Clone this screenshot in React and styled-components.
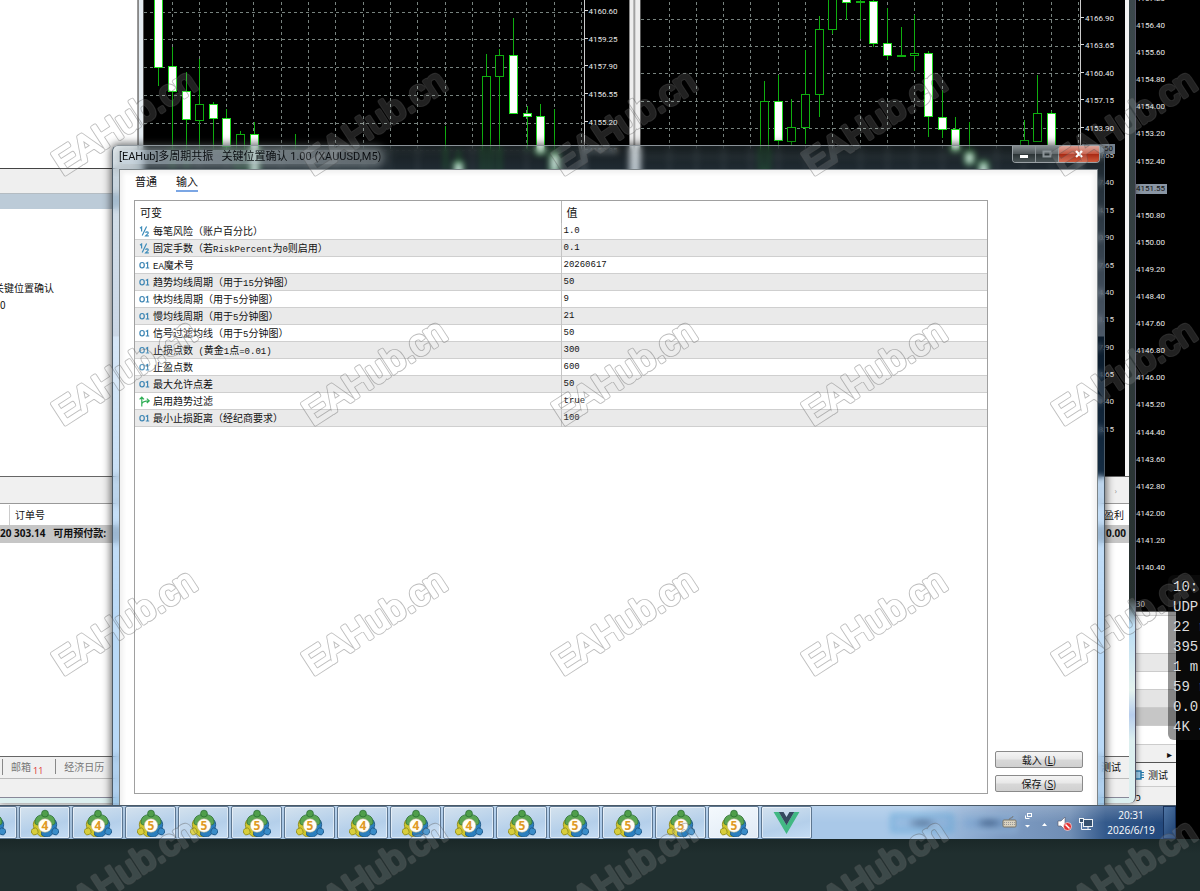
import styled, { createGlobalStyle } from "styled-components";

const uiFont = `"Open Sans", "Noto Sans CJK SC", sans-serif`;
const titleFont = `Roboto, "Noto Sans CJK SC", sans-serif`;
const cjkFont = `"Noto Sans CJK SC", "Noto Sans", sans-serif`;
const monoFont = `"Liberation Mono", "Noto Sans CJK SC", monospace`;

const GlobalStyle = createGlobalStyle`
  * {
    box-sizing: border-box;
  }
  body {
    margin: 0;
    background: #202f2f;
    font-family: ${cjkFont};
    font-size: 10px;
    color: #111;
  }
  button {
    font-family: inherit;
    margin: 0;
    padding: 0;
  }
`;

/* ---------- page ---------- */

const Page = styled.div`
  position: relative;
  display: flex;
  flex-direction: column;
  min-height: 100vh;
  overflow: hidden;
`;

const Session = styled.div`
  flex: 1;
  display: flex;
  background: black;
`;

const Remote = styled.div`
  flex: 1;
  min-width: 0;
  display: flex;
  flex-direction: column;
`;

const Margin = styled.div`
  width: 24px;
`;

const Footer = styled.footer`
  height: 52px;
  background: linear-gradient(#1a2828, #202f2f 14px);
`;

const Desktop = styled.main`
  position: relative;
  flex: 1;
  overflow: hidden;
  background: #f0f0f0;
`;

const StatsPanel = styled.pre`
  position: absolute;
  top: 575px;
  right: 0;
  width: 32px;
  margin: 0;
  padding: 2px 0 3px 5px;
  overflow: hidden;
  border-radius: 6px 0 0 6px;
  background: rgba(20, 20, 20, 0.45);
  color: #dcdcdc;
  font-family: ${monoFont};
  font-size: 14px;
  line-height: 20px;
`;

const WatermarkLayer = styled.svg`
  position: absolute;
  inset: 0;
  width: 100%;
  height: 100%;
  pointer-events: none;
`;

/* ---------- terminal windows ---------- */

const BackWindow = styled.section`
  position: absolute;
  top: 0;
  right: 0;
  bottom: 0;
  width: 40px;
  display: flex;
  flex-direction: column;
  background: #fff;
`;

const TerminalFrame = styled.section`
  position: absolute;
  top: 0;
  left: 0;
  right: 40px;
  bottom: 2px;
  padding: 0 6px 5px 0;
  display: flex;
  border-right: 1px solid #556;
  border-radius: 0 0 6px 0;
  background: linear-gradient(#3c484c, #26302f 600px, #b9dcf4 625px, #e4f2ee 690px, #b7cdec 715px, #dcefef 740px);
  box-shadow: 0 0 6px rgba(0, 0, 0, 0.5);
`;

const Terminal = styled.div`
  flex: 1;
  min-width: 0;
  display: flex;
  flex-direction: column;
  background: #f0f0f0;
`;

const Upper = styled.div`
  height: 476px;
  display: flex;
`;

const Navigator = styled.aside`
  width: 138px;
  display: flex;
  flex-direction: column;
  border-right: 1px solid #999;
  background: #fff;
`;

const NavTop = styled.div`
  height: 169px;
  border-bottom: 1px solid #444;
`;

const NavBar = styled.div`
  height: 25px;
  border-bottom: 1px solid #b4bcc2;
  background: #efefef;
`;

const NavCaption = styled.div`
  height: 15px;
  background: #bccbd8;
`;

const NavList = styled.ul`
  margin: 0;
  padding: 70px 0 0;
  list-style: none;
  overflow: hidden;
  white-space: nowrap;

  li {
    height: 17px;
    line-height: 17px;
  }
  li:first-child {
    text-indent: -6px;
  }
`;

const Splitter = styled.div`
  width: ${(p) => p.$width}px;
  border-left: 1px solid #888;
  border-right: 1px solid #555;
  background: ${(p) =>
    p.$double ? "linear-gradient(90deg, #eee 3px, #888 4px, #eee 6px)" : "#e4ecf2"};
`;

const ChartPane = styled.div`
  flex: 1;
  min-width: 0;
  display: flex;
  background: #000;
`;

const Plot = styled.svg`
  flex: 1;
  min-width: 0;
  height: 100%;
`;

const Axis = styled.ul`
  flex: none;
  width: 44px;
  height: ${(p) => p.$height}px;
  margin: 0;
  margin-top: ${(p) => p.$top}px;
  padding: 0;
  display: flex;
  flex-direction: column;
  justify-content: space-between;
  list-style: none;
  color: #e8e8e8;
  font-family: Roboto, "Noto Sans", sans-serif;
  font-size: 8px;
  line-height: 10px;
`;

const AxisLabel = styled.li`
  width: max-content;
  padding-right: 2px;
  color: ${(p) => (p.$active ? "#111" : "inherit")};
  background: ${(p) => (p.$active ? "#8a96a4" : "none")};

  &::before {
    content: "";
    display: ${(p) => (p.$tick ? "inline-block" : "none")};
    width: 3px;
    height: 1px;
    margin-right: 1px;
    vertical-align: 3px;
    background: #d8d8d8;
  }
`;

const AxisColumn = styled.div`
  position: relative;
  overflow: hidden;
  border-left: 1px solid #ccc;
`;

const LastPrice = styled.span`
  position: absolute;
  top: 144px;
  right: 10px;
  padding: 0 2px;
  background: #76828e;
  color: #111;
  font-family: Roboto, "Noto Sans", sans-serif;
  font-size: 8px;
  line-height: 10px;
`;

const BackChart = styled.div`
  flex: none;
  height: 612px;
  overflow: hidden;
  background: #000;
  border-bottom: 1px solid #555;
`;

const BackTime = styled.div`
  padding-top: 25px;
  color: #bbb;
  font-size: 8px;
  line-height: 12px;
`;

const BackRow = styled.div`
  flex: none;
  height: ${(p) => p.$height}px;
  padding-right: 4px;
  border-bottom: 1px solid ${(p) => p.$line || "#ccc"};
  background: ${(p) => p.$bg || "#fff"};
  display: flex;
  align-items: center;
  justify-content: ${(p) => (p.$end ? "flex-end" : "flex-start")};
  gap: 4px;
  white-space: nowrap;
`;

const PaneEdge = styled.div`
  width: 4px;
  background: #f4f4f4;
`;

const ToolboxBar = styled.div`
  height: 28px;
  border-top: 1px solid #666;
  border-bottom: 1px solid #999;
  padding-right: 12px;
  display: flex;
  align-items: center;
  justify-content: flex-end;
  color: #888;
  font-size: 8px;
`;

const ToolboxHead = styled.div`
  height: 21px;
  display: flex;
  align-items: center;
  justify-content: space-between;
  padding-right: 5px;
  background: #fff;

  span:first-child {
    margin-left: 9px;
    padding-left: 5px;
    border-left: 1px solid #ccc;
    line-height: 20px;
  }
`;

const Balance = styled.div`
  height: 18px;
  display: flex;
  justify-content: space-between;
  padding-right: 3px;
  background: #c6c6c6;
  font-family: ${uiFont};
  font-weight: 700;
  line-height: 17px;
  white-space: pre;
`;

const ToolboxBody = styled.div`
  flex: 1;
  border-bottom: 1px solid #666;
  background: #fff;
`;

const ToolboxTabs = styled.nav`
  height: 22px;
  display: flex;
  align-items: center;
  border-bottom: 1px solid #bbb;
  padding: 0 8px 2px 2px;
`;

const ToolboxTab = styled.a`
  border-left: 1px solid #888;
  margin-right: 12px;
  padding-left: 8px;
  color: #777;
  line-height: 15px;
  text-decoration: none;

  &:last-child {
    margin: 0 0 0 auto;
    border: none;
    color: #111;
  }
  sub {
    color: #d33;
    font-family: ${uiFont};
    font-size: 9px;
    line-height: 1;
    margin-left: 2px;
  }
`;

const StatusBar = styled.div`
  height: 19px;
  border-bottom: 1px solid #889;
`;

/* ---------- dialog ---------- */

const Dialog = styled.section`
  position: absolute;
  top: 145px;
  left: 112px;
  right: 71px;
  bottom: -8px;
  display: flex;
  flex-direction: column;
  padding: 0 6px;
  border: 1px solid #8a9298;
  border-left-color: #4c5a66;
  border-right-color: #4c5a66;
  border-radius: 6px 6px 0 0;
  background: linear-gradient(
    rgba(120, 150, 165, 0.2),
    rgba(110, 150, 180, 0.3) 30px,
    rgba(150, 175, 205, 0.5) 190px,
    rgba(50, 130, 210, 0.2) 191px,
    rgba(80, 160, 235, 0.4) 480px
  );
  backdrop-filter: blur(3px);
  box-shadow: 0 0 9px 1px rgba(0, 0, 0, 0.65);
`;

const TitleBar = styled.header`
  height: 23px;
  margin-right: -2px;
  display: flex;
  align-items: flex-start;
  justify-content: space-between;
`;

const Title = styled.h1`
  margin: 4px 0 0;
  font-family: ${titleFont};
  font-size: 11px;
  font-weight: 400;
  line-height: 14px;
  color: #0c0f12;
  white-space: pre;
  border-radius: 6px;
  background: linear-gradient(90deg, rgba(190, 204, 214, 0.65), rgba(160, 168, 172, 0.5));
  box-shadow: 0 0 8px 4px rgba(165, 175, 180, 0.5);
`;

const WindowButtons = styled.div`
  display: flex;
  overflow: hidden;
  border: 1px solid #99a0a4;
  border-top: none;
  border-radius: 0 0 4px 4px;
`;

const WindowButton = styled.button`
  width: ${(p) => (p.$close ? 40 : 23)}px;
  height: 16px;
  display: grid;
  place-items: center;
  border: none;
  border-right: ${(p) => (p.$close ? "none" : "1px solid #8b9296")};
  background: ${(p) =>
    p.$close
      ? "linear-gradient(#d89a8e, #c4553f 48%, #a92a14 52%, #cf5a3c)"
      : "linear-gradient(#848b8e, #50585b 48%, #2c3436 52%, #4c5658)"};
`;

const Client = styled.div`
  flex: 1;
  display: flex;
  flex-direction: column;
  padding: 0 14px 18px 14px;
  border: 1px solid #7c8488;
  border-bottom: none;
  background: #fff;
  box-shadow: inset 0 0 4px 3px #f0f0f0;
`;

const Tabs = styled.div`
  display: flex;
  gap: 19px;
  height: 30px;
  padding-left: 1px;
`;

const Tab = styled.button`
  height: 22px;
  padding-top: 1px;
  border: none;
  border-bottom: 2px solid ${(p) => (p.$active ? "#7ba6e4" : "transparent")};
  background: none;
  font-size: 11px;
  line-height: 20px;
  color: #111;
`;

const Body = styled.div`
  flex: 1;
  display: flex;
  gap: 7px;
`;

const TableFrame = styled.div`
  flex: 1;
  border: 1px solid #a0a0a0;
`;

const Table = styled.table`
  width: 100%;
  border-collapse: collapse;
  table-layout: fixed;
`;

const Th = styled.th`
  height: 22px;
  padding: 0 5px;
  text-align: left;
  font-size: 11px;
  font-weight: 400;
  line-height: 20px;

  & + & {
    border-left: 1px solid #b8b8b8;
  }
`;

const Row = styled.tr`
  background: #fff;
  border-bottom: 1px solid #cfcfcf;

  &:nth-child(even) {
    background: #eaeaea;
  }
`;

const Td = styled.td`
  padding: 0;

  & + & {
    border-left: 1px solid #c4c4c4;
    padding-left: 2px;
  }
`;

const Cell = styled.div`
  display: flex;
  align-items: center;
  gap: 3px;
  height: 16px;
  line-height: 16px;

  svg {
    flex: none;
    margin-left: 4px;
  }
`;

const Mono = styled.span`
  font-family: ${monoFont};
  font-size: 9px;
  line-height: 1;
`;

const Side = styled.div`
  width: 88px;
  display: flex;
  flex-direction: column;
  justify-content: flex-end;
  gap: 7px;
  padding-bottom: 2px;
`;

const ActionButton = styled.button`
  height: 17px;
  border: 1px solid #8a8a8a;
  border-radius: 2px;
  background: linear-gradient(#f4f4f4, #e8e8e8 48%, #d8d8d8 52%, #d0d0d0);
  font-size: 10px;
  line-height: 14px;
  color: #111;
`;

/* ---------- taskbar ---------- */

const Taskbar = styled.footer`
  height: 34px;
  display: flex;
  justify-content: space-between;
  overflow: hidden;
  border-top: 1px solid #4a5a68;
  background: linear-gradient(rgba(255, 255, 255, 0.2), rgba(255, 255, 255, 0) 50%),
    linear-gradient(90deg, #9db9d4, #a9c8e8 30%, #a9c8e8 78%, #7f9dc4 85%, #6f8db4 91%, #345a8c 94%, #1f4478);
`;

const Apps = styled.div`
  display: flex;
  gap: 2px;
  margin-left: -34px;
`;

const AppButton = styled.button`
  width: 51px;
  display: grid;
  place-items: center;
  border: 1px solid #5d7690;
  border-radius: 2px;
  background: ${(p) =>
    p.$active
      ? "linear-gradient(160deg, #f4f9fd, #dfeaf6)"
      : "linear-gradient(165deg, #d4e2ee, #b4cfea 60%, #c4dcf4)"};
  box-shadow: inset 0 0 0 1px rgba(255, 255, 255, 0.5);
`;

const Tray = styled.div`
  display: flex;
  align-items: center;
`;

const LanguageBar = styled.div`
  display: flex;
  gap: 8px;
  margin-right: -16px;
  filter: blur(3px);
`;

const LanguageItem = styled.span`
  width: ${(p) => p.$width}px;
  height: 18px;
  border: 2px solid ${(p) => p.$edge};
  background: radial-gradient(closest-side, rgba(30, 60, 100, 0.6) 25%, rgba(110, 160, 210, 0.3) 55%);
`;

const TrayIcons = styled.svg`
  display: block;
  position: relative;
`;

const Clock = styled.time`
  width: 60px;
  color: #fff;
  font-family: ${uiFont};
  font-size: 10px;
  line-height: 15px;
  text-align: center;
`;

const ShowDesktop = styled.button`
  width: 13px;
  height: 100%;
  margin-left: 2px;
  border: 1px solid #16305a;
  background: linear-gradient(120deg, #4f75a4, #1c3f70);
`;

/* ---------- data ---------- */

// x, high, low, top, bottom, kind: "d" filled, "u" hollow, "w" wick only
const leftCandles = [
  [14, 0, 86, -4, 67, "d"],
  [28, 47, 170, 66, 91, "d"],
  [42, 72, 170, 91, 119, "d"],
  [55, 59, 150, 104, 120, "u"],
  [69, 102, 150, 104, 118, "d"],
  [82, 109, 160, 118, 146, "d"],
  [96, 131, 160, 134, 170, "u"],
  [110, 122, 170, 134, 178, "d"],
  [151, 134, 150, 0, 0, "w"],
  [301, 126, 170, 0, 0, "w"],
  [314, 150, 170, 162, 175, "d"],
  [342, 54, 200, 76, 200, "u"],
  [355, 49, 180, 55, 76, "u"],
  [369, 18, 113, 55, 113, "d"],
  [383, 106, 150, 113, 116, "d"],
  [396, 104, 150, 116, 153, "d"],
  [410, 109, 165, 154, 172, "d"],
];

const rightCandles = [
  [123, 81, 170, 101, 170, "u"],
  [137, 75, 146, 101, 140, "d"],
  [150, 99, 146, 127, 141, "u"],
  [164, 50, 144, 94, 127, "u"],
  [178, 16, 117, 29, 94, "u"],
  [191, -4, 34, -4, 29, "u"],
  [205, -4, 20, -4, 2, "d"],
  [219, -4, 39, 1, 2, "u"],
  [232, 0, 47, 1, 43, "d"],
  [246, 8, 60, 43, 55, "d"],
  [260, 27, 56, 55, 56, "u"],
  [273, 15, 71, 53, 55, "u"],
  [287, 51, 137, 53, 116, "d"],
  [301, 90, 138, 117, 129, "d"],
  [314, 117, 150, 129, 150, "d"],
  [328, 122, 150, 152, 163, "d"],
  [342, 160, 176, 162, 176, "d"],
  [383, 120, 150, 140, 150, "u"],
  [396, 75, 142, 113, 141, "u"],
  [410, 111, 160, 113, 146, "d"],
];

const prices = (from, step, count) =>
  Array.from({ length: count }, (_, i) => (from - i * step).toFixed(2));

const backPrices = prices(4157.2, 0.8, 22).map((p) => (p === "4151.60" ? "4151.55" : p));

const inputs = [
  ["half", "每笔风险（账户百分比）", "1.0"],
  ["half", "固定手数（若RiskPercent为0则启用）", "0.1"],
  ["int", "EA魔术号", "20260617"],
  ["int", "趋势均线周期（用于15分钟图）", "50"],
  ["int", "快均线周期（用于5分钟图）", "9"],
  ["int", "慢均线周期（用于5分钟图）", "21"],
  ["int", "信号过滤均线（用于5分钟图）", "50"],
  ["int", "止损点数 (黄金1点=0.01)", "300"],
  ["int", "止盈点数", "600"],
  ["int", "最大允许点差", "50"],
  ["bool", "启用趋势过滤", "true"],
  ["int", "最小止损距离（经纪商要求）", "100"],
];

const apps = ["4", "4", "4", "5", "5", "5", "5", "4", "4", "4", "5", "5", "5", "5", "5"];

/* ---------- drawings ---------- */

const Chart = ({ candles, gridX, gridY, stepY }) => (
  <Plot>
    <g stroke="#77827e" strokeDasharray="3 3" shapeRendering="crispEdges">
      {Array.from({ length: 17 }, (_, i) => (
        <line key={`v${i}`} x1={gridX + i * 27.3} x2={gridX + i * 27.3} y1="2" y2="476" />
      ))}
      {Array.from({ length: 16 }, (_, i) => (
        <line key={`h${i}`} x1="0" x2="100%" y1={gridY + i * stepY} y2={gridY + i * stepY} />
      ))}
    </g>
    {candles.map(([x, high, low, top, bottom, kind]) => (
      <g key={x} stroke="#0fae0f" shapeRendering="crispEdges">
        <line x1={x + 0.5} x2={x + 0.5} y1={high} y2={low} />
        {kind !== "w" && (
          <rect
            x={x - 3.5}
            y={top + 0.5}
            width="8"
            height={bottom - top}
            fill={kind === "d" ? "#fff" : "#000"}
            stroke={kind === "d" ? "#1fe01f" : "#0fae0f"}
          />
        )}
      </g>
    ))}
  </Plot>
);

const HalfIcon = () => (
  <svg width="11" height="11" viewBox="0 0 11 11" fill="none" stroke="#3d8cba" strokeWidth="1.2">
    <path d="M1 2.2 L2.6 1 V5.6 M7.6 0.6 L3.2 9.6" />
    <path d="M6.6 6.8 C7 5.4 9.6 5.6 9.2 7.2 C9 8 7.4 8.8 6.6 9.8 H9.8" />
  </svg>
);

const IntIcon = () => (
  <svg width="11" height="11" viewBox="0 0 11 11" fill="none" stroke="#3d86b4" strokeWidth="1.2">
    <ellipse cx="3.1" cy="5.2" rx="2.2" ry="2.7" />
    <path d="M6.8 3.4 L8.6 2.4 V8 M6.8 8 H10.2" />
  </svg>
);

const BoolIcon = () => (
  <svg width="11" height="11" viewBox="0 0 11 11" fill="none" stroke="#2fae55" strokeWidth="1.2">
    <path d="M2.8 10.4 V1.6 M0.6 3.4 L2.8 1.2 L5 3.4 M2.8 8 C3.2 5.6 5.4 4.8 10 4.8 M7.8 2.6 L10.2 4.8 L7.8 7" />
  </svg>
);

const icons = { half: HalfIcon, int: IntIcon, bool: BoolIcon };

// one of the three figures that stand round the badge, head outwards
const Figure = ({ angle, fill, light, edge }) => (
  <g transform={`rotate(${angle} 14 16.5)`} stroke={edge} strokeWidth="0.8">
    <path d="M4 14.5 C3.4 9 6.6 5.4 14 5.4 C21.4 5.4 24.6 9 24 14.5 C21 18 7 18 4 14.5 Z" fill={fill} />
    <circle cx="14" cy="4.6" r="3.4" fill={light} />
  </g>
);

const MetaIcon = ({ digit }) => (
  <svg width="28" height="28" viewBox="0 0 28 28">
    <Figure angle={-120} fill="#cfc62c" light="#d8ce3c" edge="#8f8a1c" />
    <Figure angle={120} fill="#2b7fbe" light="#3a8cc8" edge="#1d5786" />
    <Figure angle={0} fill="#5aa552" light="#4f9e4a" edge="#2c6e35" />
    <circle cx="14" cy="16.5" r="6.8" fill="#fffdf6" stroke="#b9b18c" strokeWidth="0.6" />
    <text x="14" y="21" textAnchor="middle" fontFamily="Open Sans, sans-serif" fontSize="12" fontWeight="700" fill="#e09a24">
      {digit}
    </text>
  </svg>
);

const VueIcon = () => (
  <svg width="27" height="24" viewBox="0 0 28 26">
    <path d="M0 1 H5.6 L14 15.4 L22.4 1 H28 L14 25 Z" fill="#41b883" />
    <path d="M5.6 1 H10.8 L14 6.4 L17.2 1 H22.4 L14 15.4 Z" fill="#34495e" />
  </svg>
);

const TrayDrawing = () => (
  <TrayIcons width="100" height="26" viewBox="0 0 100 26">
    <g>
      <path d="M8 10 C8 7 12 9 12 6" fill="none" stroke="#777" />
      <rect x="2" y="10" width="13" height="7" rx="1" fill="#d9d2c0" stroke="#7a7464" />
      <path d="M3 12.5 H14 M3 14.5 H14" stroke="#999" strokeDasharray="1 1" />
    </g>
    <g fill="none" stroke="#fff">
      <rect x="26.5" y="3.5" width="4" height="3" />
      <path d="M24.5 5.5 V8.5 H28.5" />
    </g>
    <path d="M24 15 H29 L26.5 17.5 Z M41 16 L43.5 13 L46 16 Z" fill="#fff" />
    <path d="M57 11 H60 L64 7 V20 L60 16 H57 Z" fill="#fff" stroke="#556" strokeWidth="0.6" />
    <circle cx="66.5" cy="16.5" r="4" fill="#e23434" stroke="#fff" strokeWidth="0.6" />
    <path d="M64.5 14.5 L68.5 18.5" stroke="#fff" strokeWidth="1.4" />
    <g stroke="#eef2f6" fill="#35506e">
      <rect x="82.5" y="9.5" width="9" height="7" />
      <path d="M84 19.5 H90 M87 17 V19" />
      <rect x="78.5" y="8.5" width="4" height="4" />
      <path d="M80.5 12.5 V19.5 H84" fill="none" />
    </g>
  </TrayIcons>
);

const ChipIcon = () => (
  <svg width="8" height="12" viewBox="0 0 8 12">
    <rect x="-4" y="2" width="9" height="8" fill="#9fd0ee" stroke="#2277aa" strokeWidth="1.4" />
    <path d="M5 3.5 H8 M5 6 H8 M5 8.5 H8" stroke="#2277aa" />
  </svg>
);

const Watermark = () => {
  const mark = {
    transform: "translate(63 176) rotate(-33)",
    fontFamily: "Liberation Sans, sans-serif",
    fontSize: 36,
    strokeLinejoin: "round",
  };
  return (
    <WatermarkLayer aria-hidden="true">
      <defs>
        <mask id="rim" maskUnits="userSpaceOnUse" x="0" y="0" width="250" height="250">
          <text {...mark} fill="#fff" stroke="#fff" strokeWidth="4">EAHub.cn</text>
          <text {...mark} fill="#000" stroke="#000" strokeWidth="2.4">EAHub.cn</text>
        </mask>
        <pattern id="marks" width="250" height="250" patternUnits="userSpaceOnUse">
          <g opacity="0.13">
            <text {...mark} fill="#fff" stroke="#fff" strokeWidth="3">EAHub.cn</text>
          </g>
          <rect width="250" height="250" fill="#555" opacity="0.4" mask="url(#rim)" />
        </pattern>
      </defs>
      <rect width="100%" height="100%" fill="url(#marks)" />
    </WatermarkLayer>
  );
};

/* Latin runs inside a name are set in the monospaced face */
const MixedText = ({ text }) =>
  text
    .split(/([\x20-\x7e]+)/)
    .filter(Boolean)
    .map((part, i) =>
      /^[\x20-\x7e]/.test(part) ? <Mono key={i}>{part}</Mono> : part
    );

const MixedName = styled.span`
  white-space: pre;
`;

/* ---------- parts ---------- */

const BackTerminal = () => (
  <BackWindow>
    <BackChart>
      <Axis $top={-6} $height={579}>
        {backPrices.map((p) => (
          <AxisLabel key={p} $active={p === "4151.55"}>{p}</AxisLabel>
        ))}
      </Axis>
      <BackTime>30</BackTime>
    </BackChart>
    <BackRow $height={4} $bg="#eee" />
    <BackRow $height={38} />
    <BackRow $height={18} $bg="#e8e8e8" />
    <BackRow $height={18} />
    <BackRow $height={18} $bg="#e4e4e4" />
    <BackRow $height={18} $bg="#c6c6c6" />
    <BackRow $height={19} />
    <BackRow $height={18} $bg="#f0f0f0" $line="#555" $end>▸</BackRow>
    <BackRow $height={24} $bg="#f4f4f4">
      <ChipIcon />
      测试
    </BackRow>
    <BackRow $height={19} $bg="#f0f0f0">ɔ</BackRow>
  </BackWindow>
);

const MainTerminal = () => (
  <TerminalFrame>
    <Terminal>
      <Upper>
        <Navigator>
          <NavTop />
          <NavBar />
          <NavCaption />
          <NavList>
            <li>关键位置确认</li>
            <li>0</li>
          </NavList>
        </Navigator>
        <Splitter $width={6} />
        <ChartPane>
          <Chart candles={leftCandles} gridX={28} gridY={12} stepY={27.75} />
          <AxisColumn>
            <Axis $top={7} $height={426}>
              {prices(4160.6, 1.35, 16).map((p) => (
                <AxisLabel key={p} $tick>{p}</AxisLabel>
              ))}
            </Axis>
          </AxisColumn>
        </ChartPane>
        <Splitter $width={12} $double />
        <ChartPane>
          <Chart candles={rightCandles} gridX={28} gridY={19} stepY={27.4} />
          <AxisColumn>
            <Axis $top={14} $height={421}>
              {prices(4166.9, 3.25, 16).map((p) => (
                <AxisLabel key={p} $tick>{p}</AxisLabel>
              ))}
            </Axis>
            <LastPrice>4151.50</LastPrice>
          </AxisColumn>
        </ChartPane>
        <PaneEdge />
      </Upper>
      <ToolboxBar>›</ToolboxBar>
      <ToolboxHead>
        <span>订单号</span>
        <span>盈利</span>
      </ToolboxHead>
      <Balance>
        <span>20 303.14   可用预付款:</span>
        <span>0.00</span>
      </Balance>
      <ToolboxBody />
      <ToolboxTabs>
        <ToolboxTab href="#mail">
          邮箱<sub>11</sub>
        </ToolboxTab>
        <ToolboxTab href="#calendar">经济日历</ToolboxTab>
        <ToolboxTab href="#tester">测试</ToolboxTab>
      </ToolboxTabs>
      <StatusBar />
    </Terminal>
  </TerminalFrame>
);

const InputsDialog = () => (
  <Dialog role="dialog" aria-labelledby="dialog-title">
    <TitleBar>
      <Title id="dialog-title">[EAHub]多周期共振   关键位置确认 1.00 (XAUUSD,M5)</Title>
      <WindowButtons>
        <WindowButton aria-label="最小化">
          <svg width="10" height="10"><rect x="1" y="6" width="8" height="3" fill="#fff" /></svg>
        </WindowButton>
        <WindowButton aria-label="最大化" disabled>
          <svg width="10" height="10"><rect x="1.5" y="2.5" width="7" height="5" fill="none" stroke="#8c9498" strokeWidth="2" /></svg>
        </WindowButton>
        <WindowButton $close aria-label="关闭">
          <svg width="10" height="10"><path d="M2 2 L8 8 M8 2 L2 8" stroke="#fff" strokeWidth="2.4" /></svg>
        </WindowButton>
      </WindowButtons>
    </TitleBar>
    <Client>
      <Tabs role="tablist">
        <Tab role="tab" aria-selected="false">普通</Tab>
        <Tab role="tab" aria-selected="true" $active>输入</Tab>
      </Tabs>
      <Body>
        <TableFrame>
          <Table>
            <thead>
              <tr>
                <Th>可变</Th>
                <Th>值</Th>
              </tr>
            </thead>
            <tbody>
              {inputs.map(([type, name, value]) => {
                const Icon = icons[type];
                return (
                  <Row key={name}>
                    <Td>
                      <Cell>
                        <Icon />
                        <MixedName>
                          <MixedText text={name} />
                        </MixedName>
                      </Cell>
                    </Td>
                    <Td>
                      <Cell>
                        <Mono>{value}</Mono>
                      </Cell>
                    </Td>
                  </Row>
                );
              })}
            </tbody>
          </Table>
        </TableFrame>
        <Side>
          <ActionButton>载入 (<u>L</u>)</ActionButton>
          <ActionButton>保存 (<u>S</u>)</ActionButton>
        </Side>
      </Body>
    </Client>
  </Dialog>
);

export default function App() {
  return (
    <Page>
      <GlobalStyle />
      <Session>
        <Remote>
          <Desktop>
            <BackTerminal />
            <MainTerminal />
            <InputsDialog />
          </Desktop>
          <Taskbar>
            <Apps>
              {apps.map((digit, i) => (
                <AppButton key={i} aria-label={`MetaTrader ${digit}`} $active={i === apps.length - 1}>
                  <MetaIcon digit={digit} />
                </AppButton>
              ))}
              <AppButton aria-label="Vue">
                <VueIcon />
              </AppButton>
            </Apps>
            <Tray>
              <LanguageBar>
                <LanguageItem $width={62} $edge="#5fa8d8" />
                <LanguageItem $width={56} $edge="#9ab8d8" />
              </LanguageBar>
              <TrayDrawing />
              <Clock>
                20:31
                <br />
                2026/6/19
              </Clock>
              <ShowDesktop aria-label="显示桌面" />
            </Tray>
          </Taskbar>
        </Remote>
        <Margin />
      </Session>
      <Footer />
      <StatsPanel>{"10:\nUDP\n22 r\n395\n1 m\n59 r\n0.0\n4K J"}</StatsPanel>
      <Watermark />
    </Page>
  );
}
